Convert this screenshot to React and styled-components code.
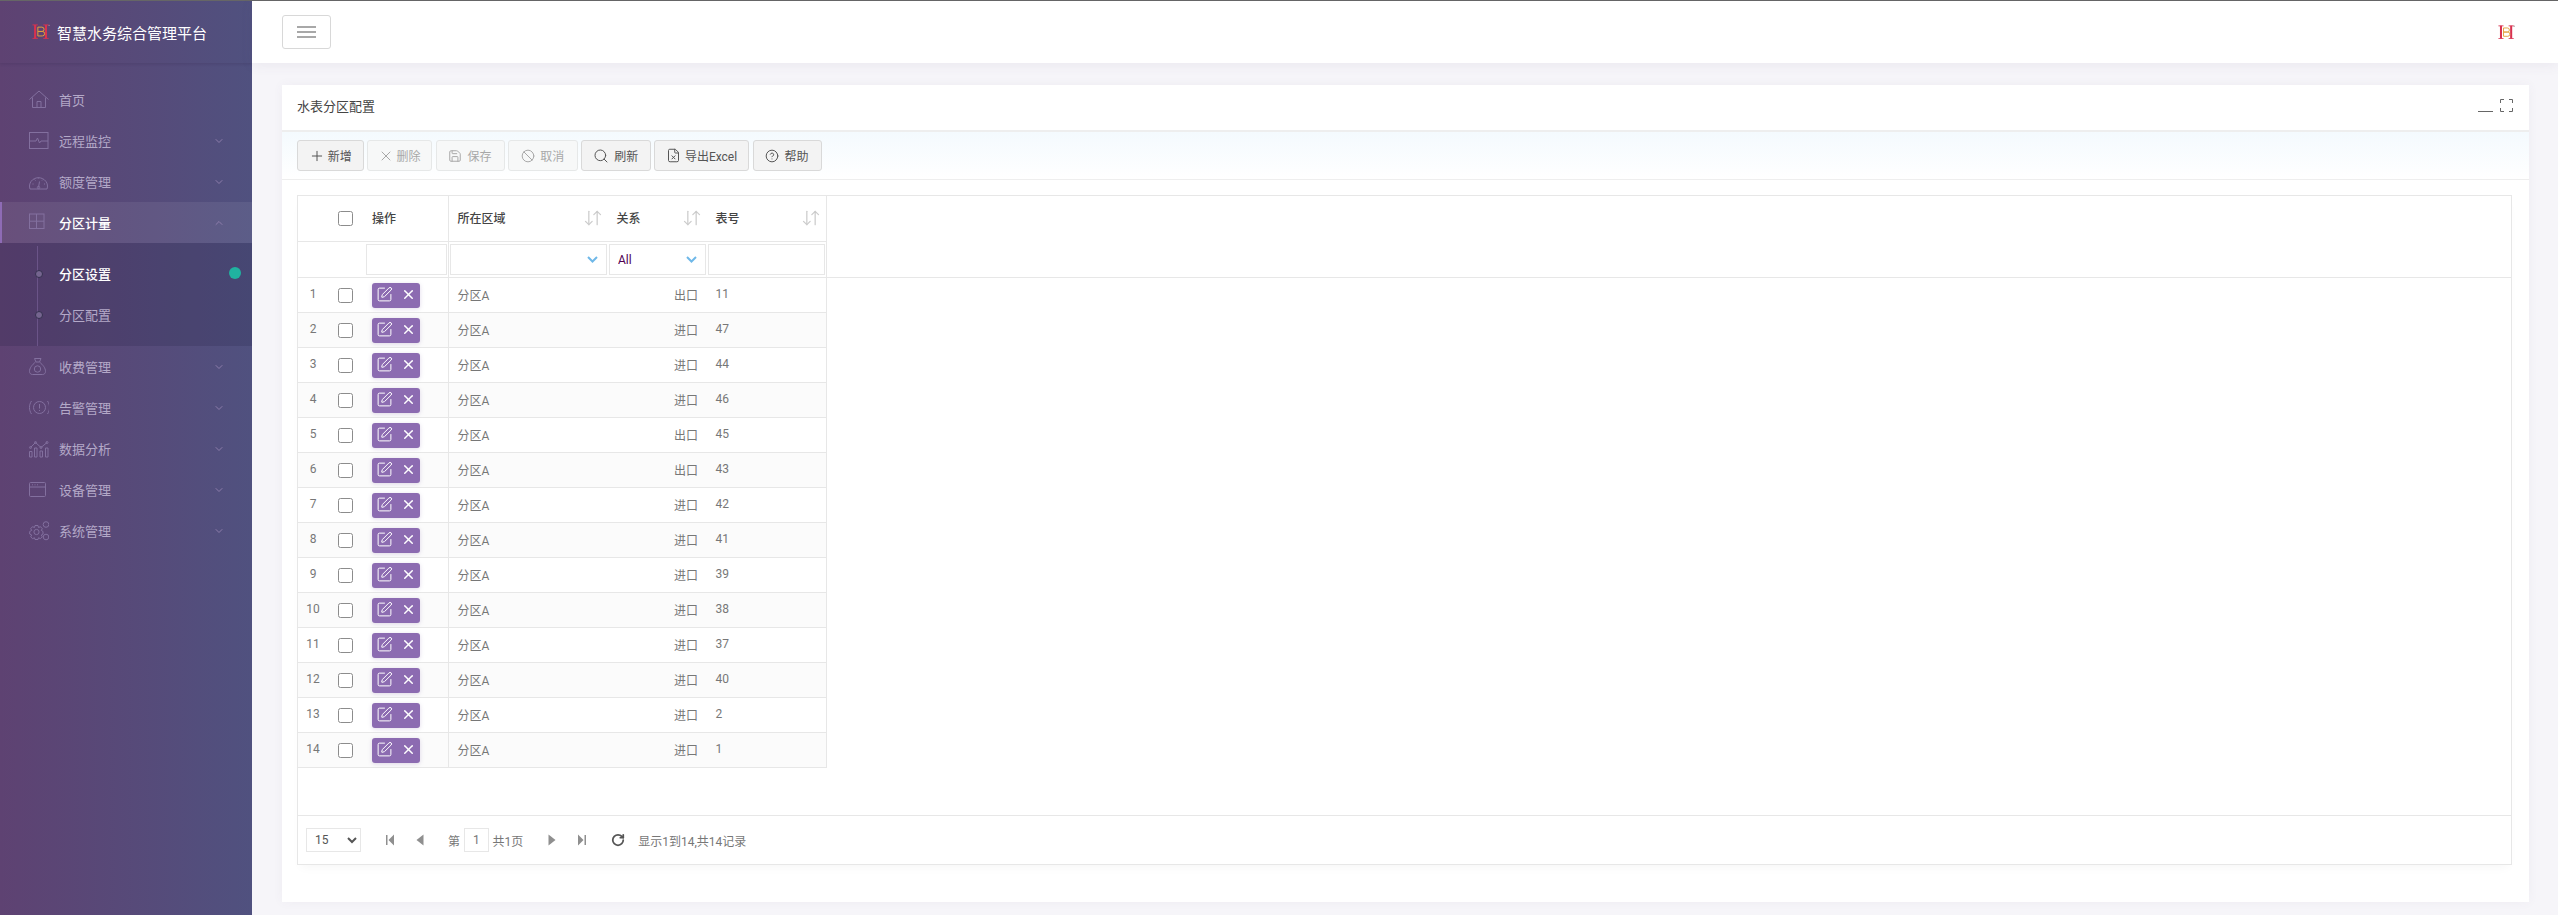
import styled, { createGlobalStyle } from 'styled-components';
import { ArrowDownUp, Ban, ChevronDown, ChevronUp, CircleHelp, FileX, Plus, RotateCw, Save, Search, SquarePen, X } from 'lucide-react';

const FONT = `Roboto, "Noto Sans CJK SC", sans-serif`;

const rows = [
  ['出口', '11'], ['进口', '47'], ['进口', '44'], ['进口', '46'], ['出口', '45'], ['出口', '43'], ['进口', '42'],
  ['进口', '41'], ['进口', '39'], ['进口', '38'], ['进口', '37'], ['进口', '40'], ['进口', '2'], ['进口', '1'],
];

const Logo = ({ size = 18 }) => (
  <svg width={size} height={size * 0.85} viewBox="0 0 20 17" fill="none">
    <path d="M0.500 1h6M0.500 16h6M12.500 1h6M12.500 16h6" stroke="#d8324f" strokeWidth="1" />
    <path d="M3.500 1v15M15.500 1v15" stroke="#d8324f" strokeWidth="2.400" />
    <path d="M6.500 3.500h4.500a2.300 2.300 0 0 1 0 4.800H6.500zM6.500 8.300h5a2.500 2.500 0 0 1 0 5h-5z" stroke="#e2a13c" strokeWidth="1.100" />
    <circle cx="19" cy="1.500" r="0.800" fill="#999" />
  </svg>
);

const icons = {
  home: <><path d="M0.500 9.500 10 1 19.500 9.500" /><path d="M3.500 7.500v10h13v-10M8 17.500v-6h4v6" /></>,
  pulse: <><rect x="0.500" y="1.500" width="18.500" height="16" /><path d="M1 10h6l1.500-3 2 5 1.500-2h7" /></>,
  gauge: <><path d="M1.500 17a9 8.500 0 1 1 17 0z" transform="translate(-.5 0)" /><path d="M9.500 15.500l1-6M3.500 12h1M15 12h1M5.500 7.500l1 1M14 7.500l-1 1M9.500 5.500v1" /><circle cx="9.500" cy="15.500" r="1.200" /></>,
  grid: <><rect x="0.500" y="1" width="14.500" height="14.500" /><path d="M7.500 1v14.500M0.500 8.200h14.500" /></>,
  bag: <><path d="M5.500 1.500h6.500l-1.500 3.500h-3.500z" /><path d="M6.500 5C3 8 .5 11 .5 14.500c0 1.500 1 3 3 3h10c2 0 3-1.500 3-3C16.500 11 14 8 10.500 5" /><circle cx="8.500" cy="12" r="3.200" /></>,
  alert: <><circle cx="10.500" cy="9.500" r="6" /><path d="M10.500 6v4.500M10.500 12v1M2.500 3C-.2 7-.2 12 2.500 16M18.500 3c2.700 4 2.700 9 0 13" /></>,
  chart: <><path d="M.500 12.500v5.500h2.500v-5.500zM5.500 9v9H8V9zM11 12v6h2.500v-6zM16.500 9v9H19V9z" /><path d="M1.500 8.500l5-5 5.500 5 6-5" /><circle cx="1.500" cy="8.500" r="1" /><circle cx="6.500" cy="3.500" r="1" /><circle cx="12" cy="8.500" r="1" /><circle cx="18" cy="3.500" r="1" /></>,
  panel: <><rect x="0.500" y="2.500" width="16" height="14" rx="1" /><path d="M0.500 7h16M3 4.800h1M5.500 4.800h1M8 4.800h1" /></>,
  gear: <><circle cx="7.500" cy="11" r="2.600" /><path d="M6 4.500h3l.5 2 2-.8 1.800 2-1 1.700 1.700 1.100v2.500l-1.700 1 1 1.800-1.800 1.800-2-.8-.5 1.700H6l-.5-1.700-2 .8-1.800-1.800 1-1.800-2-1v-2.500l2-1.100-1-1.700 1.800-2 2 .8z" /><circle cx="17" cy="3.500" r="2.800" /><circle cx="17" cy="16" r="2.800" /></>,
};

const nav = [
  { label: '首页', icon: 'home' },
  { label: '远程监控', icon: 'pulse', arrow: true },
  { label: '额度管理', icon: 'gauge', arrow: true },
  { label: '分区计量', icon: 'grid', arrow: true, open: true },
  { label: '收费管理', icon: 'bag', arrow: true },
  { label: '告警管理', icon: 'alert', arrow: true },
  { label: '数据分析', icon: 'chart', arrow: true },
  { label: '设备管理', icon: 'panel', arrow: true },
  { label: '系统管理', icon: 'gear', arrow: true },
];

const SortIcon = () => <ArrowDownUp size={20} strokeWidth={1.500} />;

const App = () => {
  return (
    <Page>
      <GlobalStyle />
      <Sidebar>
        <Brand>
          <Logo />
          <BrandName>智慧水务综合管理平台</BrandName>
        </Brand>
        <Menu>
          {nav.map((item) => (
            <li key={item.label}>
              <MenuItem $open={item.open}>
                <MenuIcon viewBox="0 0 20 20">{icons[item.icon]}</MenuIcon>
                <span>{item.label}</span>
                {item.arrow && (
                  <MenuArrow>{item.open ? <ChevronUp size={12} strokeWidth={2} /> : <ChevronDown size={12} strokeWidth={2} />}</MenuArrow>
                )}
              </MenuItem>
              {item.open && (
                <SubMenu>
                  <SubItem $active>
                    分区设置
                    <ActiveDot />
                  </SubItem>
                  <SubItem>分区配置</SubItem>
                </SubMenu>
              )}
            </li>
          ))}
        </Menu>
      </Sidebar>
      <Main>
        <Header>
          <MenuButton>
            <span />
            <span />
            <span />
          </MenuButton>
          <Logo size={17} />
        </Header>
        <Content>
          <Panel>
            <PanelTitle>
              水表分区配置
              <WindowTools>
                <Minimize />
                <svg width="13" height="13" viewBox="0 0 13 13" fill="none" stroke="#666" strokeWidth="1">
                  <path d="M0.500 4V0.500H4M9 0.500h3.500V4M12.500 9v3.500H9M4 12.500H0.500V9" />
                </svg>
              </WindowTools>
            </PanelTitle>
            <Toolbar>
              <ToolButton $w={66.5} $gap={3}><Plus size={16} strokeWidth={1.500} />新增</ToolButton>
              <ToolButton $w={65} $gap={2} disabled><X size={16} strokeWidth={1.500} />删除</ToolButton>
              <ToolButton $w={69} disabled><Save size={14} strokeWidth={1.700} />保存</ToolButton>
              <ToolButton $w={69.5} disabled><Ban size={14} strokeWidth={1.700} />取消</ToolButton>
              <ToolButton $w={69.5}><Search size={16} strokeWidth={1.500} />刷新</ToolButton>
              <ToolButton $w={95} $gap={4}><FileX size={15} strokeWidth={1.600} />导出Excel</ToolButton>
              <ToolButton $w={69}><CircleHelp size={14} strokeWidth={1.700} />帮助</ToolButton>
            </Toolbar>
            <PanelBody>
              <GridBox>
                <GridHead>
                  <Table>
                    <Columns />
                    <thead>
                      <tr>
                        <HeadCell />
                        <CheckHeadCell><CheckBox type="checkbox" /></CheckHeadCell>
                        <HeadCell $divider>操作</HeadCell>
                        <HeadCell><SortTitle>所在区域<SortIcon /></SortTitle></HeadCell>
                        <HeadCell><SortTitle>关系<SortIcon /></SortTitle></HeadCell>
                        <HeadCell $end><SortTitle>表号<SortIcon /></SortTitle></HeadCell>
                      </tr>
                      <tr>
                        <FilterCell />
                        <FilterCell />
                        <FilterCell $divider><FilterInput /></FilterCell>
                        <FilterCell>
                          <FilterSelect defaultValue="">
                            <option value="" />
                          </FilterSelect>
                        </FilterCell>
                        <FilterCell>
                          <FilterSelect defaultValue="All">
                            <option>All</option>
                          </FilterSelect>
                        </FilterCell>
                        <FilterCell $end><FilterInput /></FilterCell>
                      </tr>
                    </thead>
                  </Table>
                </GridHead>
                <GridScroll>
                  <Table>
                    <Columns />
                    <tbody>
                      {rows.map(([relation, meter], i) => (
                        <Row key={meter} $even={i % 2 === 1}>
                          <IndexCell>{i + 1}</IndexCell>
                          <CheckCell><CheckBox type="checkbox" /></CheckCell>
                          <ActionCell $divider>
                            <ActionGroup>
                              <SquarePen size={17} strokeWidth={1.400} />
                              <X size={15} strokeWidth={2.400} />
                            </ActionGroup>
                          </ActionCell>
                          <BodyCell>分区A</BodyCell>
                          <RelationCell>{relation}</RelationCell>
                          <BodyCell $end>{meter}</BodyCell>
                        </Row>
                      ))}
                    </tbody>
                  </Table>
                </GridScroll>
                <Pager>
                  <PageSize defaultValue="15">
                    <option>15</option>
                  </PageSize>
                  <PagerGroup>
                    <PagerIcon viewBox="0 0 8 12"><path d="M0 1h1.500v10H0zM8 .500v11L2.500 6z" /></PagerIcon>
                    <PagerIcon viewBox="0 0 8 12"><path d="M7.500 .500v11L.500 6z" /></PagerIcon>
                  </PagerGroup>
                  <PageLabel>
                    第<PageInput defaultValue="1" />共1页
                  </PageLabel>
                  <PagerGroup>
                    <PagerIcon viewBox="0 0 8 12"><path d="M.500 .500v11l7-5.500z" /></PagerIcon>
                    <PagerIcon viewBox="0 0 8 12"><path d="M0 .500v11L5.500 6zM6.500 1H8v10H6.500z" /></PagerIcon>
                  </PagerGroup>
                  <Refresh><RotateCw size={14} strokeWidth={3} /></Refresh>
                  <span>显示1到14,共14记录</span>
                </Pager>
              </GridBox>
            </PanelBody>
          </Panel>
        </Content>
      </Main>
    </Page>
  );
};

const Columns = () => (
  <colgroup>
    <col style={{ width: 30 }} />
    <col style={{ width: 37 }} />
    <col style={{ width: 84 }} />
    <col style={{ width: 159 }} />
    <col style={{ width: 99 }} />
    <col style={{ width: 120 }} />
  </colgroup>
);

const GlobalStyle = createGlobalStyle`
  html, body {
    margin: 0;
    padding: 0;
    height: 100%;
    overflow: hidden;
  }

  * {
    box-sizing: border-box;
  }

  body {
    font-family: ${FONT};
    font-size: 12px;
    color: #676a6c;
  }

  svg {
    display: block;
    flex-shrink: 0;
  }
`;

const Page = styled.div`
  display: grid;
  grid-template-columns: 252px 1fr;
  height: 915px;
  border-top: 1px solid #666;
  background: #f6f5f9;
`;

const Sidebar = styled.aside`
  background: linear-gradient(90deg, #5e4272 0%, #50517f 100%);
  color: #b4a9c8;
  overflow: hidden;
`;

const Brand = styled.div`
  display: flex;
  align-items: center;
  gap: 7px;
  height: 62px;
  padding-left: 32px;
  box-shadow: 0 1px 3px rgba(50, 40, 80, 0.25);
`;

const BrandName = styled.span`
  color: #fff;
  font-size: 15px;
`;

const Menu = styled.ul`
  list-style: none;
  margin: 0;
  padding: 16px 0 0;
`;

const MenuItem = styled.div`
  position: relative;
  display: flex;
  align-items: center;
  height: 41px;
  padding-left: ${(p) => (p.$open ? '27px' : '29px')};
  font-size: 13px;
  color: ${(p) => (p.$open ? '#fff' : 'inherit')};
  font-weight: ${(p) => (p.$open ? 500 : 400)};
  border-left: ${(p) => (p.$open ? '2px solid #8e6bb5' : 'none')};
  background: ${(p) => (p.$open ? 'rgba(255, 255, 255, 0.07)' : 'transparent')};
`;

const MenuIcon = styled.svg`
  width: 20px;
  height: 20px;
  margin-right: 10px;
  fill: none;
  stroke: #83709f;
  stroke-width: 1;
`;

const MenuArrow = styled.span`
  margin-left: auto;
  margin-right: 27px;
  color: #8d7dab;
`;

const SubMenu = styled.ul`
  position: relative;
  list-style: none;
  margin: 0;
  padding: 10px 0;
  height: 103px;
  background: rgba(30, 25, 60, 0.18);

  &::before {
    content: '';
    position: absolute;
    left: 37px;
    top: 3px;
    bottom: 0;
    width: 1px;
    background: #6b5488;
  }
`;

const SubItem = styled.li`
  position: relative;
  display: flex;
  align-items: center;
  height: 41px;
  padding-left: 59px;
  font-size: 13px;
  color: ${(p) => (p.$active ? '#fff' : 'inherit')};
  font-weight: ${(p) => (p.$active ? 500 : 400)};

  &::before {
    content: '';
    position: absolute;
    left: 35px;
    top: 17px;
    width: 6px;
    height: 6px;
    border-radius: 50%;
    background: #75658f;
    border: 1px solid #35304f;
  }
`;

const ActiveDot = styled.i`
  position: absolute;
  right: 11px;
  top: 14px;
  width: 12px;
  height: 12px;
  border-radius: 50%;
  background: #20b2a0;
`;

const Main = styled.main`
  display: flex;
  flex-direction: column;
  min-width: 0;
`;

const Header = styled.header`
  display: flex;
  align-items: center;
  justify-content: space-between;
  height: 62px;
  padding: 0 43px 0 30px;
  background: #fff;
  box-shadow: 0 2px 12px rgba(90, 80, 120, 0.08);
`;

const MenuButton = styled.button`
  display: flex;
  flex-direction: column;
  align-items: center;
  justify-content: center;
  gap: 3px;
  width: 49px;
  height: 34px;
  padding: 0;
  background: #fff;
  border: 1px solid #d8d8d8;
  border-radius: 3px;

  span {
    display: block;
    width: 19px;
    height: 2px;
    background: #a8a8a8;
  }
`;

const Content = styled.div`
  flex: 1;
  padding: 22px 29px 13px 30px;
  min-height: 0;
`;

const Panel = styled.section`
  display: flex;
  flex-direction: column;
  height: 100%;
  background: #fff;
  box-shadow: 0 0 10px rgba(90, 80, 120, 0.05);
`;

const PanelTitle = styled.div`
  display: flex;
  align-items: center;
  justify-content: space-between;
  height: 47px;
  padding: 0 16px 4px 15px;
  color: #444;
  font-size: 13px;
  border-bottom: 2px solid #eeeeee;
`;

const WindowTools = styled.div`
  display: flex;
  align-items: flex-end;
  gap: 7px;
`;

const Minimize = styled.i`
  width: 15px;
  height: 1px;
  background: #666;
`;

const Toolbar = styled.div`
  display: flex;
  gap: 3.500px;
  height: 48px;
  padding: 8px 15px;
  border-bottom: 1px solid #eeeeee;
  background: linear-gradient(180deg, #f4fafe 0%, #ffffff 100%);
`;

const ToolButton = styled.button`
  display: flex;
  align-items: center;
  justify-content: center;
  gap: ${(p) => p.$gap ?? 5}px;
  width: ${(p) => p.$w}px;
  height: 31px;
  padding: 0;
  font-family: ${FONT};
  font-size: 12px;
  color: ${(p) => (p.disabled ? '#a8a8a8' : '#555')};
  background: ${(p) => (p.disabled ? '#f7f8f8' : '#f3f3f3')};
  border: 1px solid ${(p) => (p.disabled ? '#e6e8e8' : '#d9d9d9')};
  border-radius: 3px;
`;

const PanelBody = styled.div`
  flex: 1;
  min-height: 0;
  padding: 15px 17px 37px 15px;
`;

const GridBox = styled.div`
  display: flex;
  flex-direction: column;
  height: 100%;
  border: 1px solid #e7e7e7;
  box-shadow: 0 6px 10px -4px rgba(0, 0, 0, 0.04);
`;

const GridHead = styled.div`
  border-bottom: 1px solid #e7e7e7;
`;

const GridScroll = styled.div`
  flex: 1;
  min-height: 0;
`;

const Table = styled.table`
  table-layout: fixed;
  width: 529px;
  border-collapse: separate;
  border-spacing: 0;
`;

const cellEdges = (p) => `
  border-right: ${p.$divider || p.$end ? '1px solid #e7e7e7' : 'none'};
`;

const HeadCell = styled.th`
  ${cellEdges}
  height: 46px;
  padding: 0 5px 2px 7px;
  text-align: left;
  font-weight: 500;
  font-size: 12px;
  color: #444;
  border-bottom: 1px solid #e7e7e7;

  &:nth-child(n + 4) {
    padding-left: 8.500px;
  }
`;

const CheckHeadCell = styled(HeadCell)`
  padding: 0;
`;

const SortTitle = styled.div`
  display: flex;
  align-items: center;
  justify-content: space-between;
  color: #444;

  svg {
    color: #cccccc;
  }
`;

const FilterCell = styled.td`
  ${cellEdges}
  height: 35px;
  padding: 2px 1px;
`;

const FilterInput = styled.input`
  display: block;
  width: 100%;
  height: 31px;
  border: 1px solid #e7e7e7;
  outline: none;
`;

const FilterSelect = styled.select`
  display: block;
  width: 100%;
  height: 31px;
  padding: 0 8px;
  font-family: ${FONT};
  font-size: 12px;
  color: #500050;
  border: 1px solid #e7e7e7;
  border-radius: 0;
  outline: none;
  appearance: none;
  background: #fff url("data:image/svg+xml,%3Csvg xmlns='http://www.w3.org/2000/svg' width='11' height='7' viewBox='0 0 11 7' fill='none' stroke='%236fb8e8' stroke-width='2'%3E%3Cpath d='M1 1l4.500 4.500L10 1'/%3E%3C/svg%3E") no-repeat right 8px center;
`;

const Row = styled.tr`
  background: ${(p) => (p.$even ? '#fbfbfb' : '#fff')};
`;

const BodyCell = styled.td`
  ${cellEdges}
  height: 35px;
  padding: 0 7px 2px;
  color: #777;
  border-bottom: 1px solid #e7e7e7;

  &:nth-child(n + 4) {
    padding-left: 8.500px;
  }
`;

const IndexCell = styled(BodyCell)`
  padding: 0 0 2px;
  text-align: center;
`;

const CheckCell = styled(BodyCell)`
  padding: 0;
`;

const ActionCell = styled(BodyCell)`
  padding-bottom: 0;
`;

const RelationCell = styled(BodyCell)`
  text-align: right;
  padding-right: 9px;
`;

const CheckBox = styled.input`
  display: block;
  width: 15px;
  height: 15px;
  margin: 0 0 0 10px;
  appearance: none;
  background: #fff;
  border: 1px solid #8c8c8c;
  border-radius: 2.500px;
`;

const ActionGroup = styled.div`
  display: flex;
  align-items: center;
  gap: 8px;
  width: 48px;
  height: 25px;
  padding: 0 0 2px 4px;
  color: #fff;
  background: #8c6bb1;
  border-radius: 3px;
  box-shadow: 0 1px 4px rgba(140, 107, 177, 0.25);
`;

const Pager = styled.div`
  display: flex;
  align-items: center;
  height: 49px;
  padding-left: 8px;
  color: #777;
  border-top: 1px solid #e7e7e7;
`;

const PageSize = styled.select`
  width: 55px;
  height: 24px;
  padding-left: 4px;
  margin-right: 25px;
  font-family: ${FONT};
  font-size: 12px;
  color: #555;
  background: #fff;
  border: 1px solid #e7e7e7;
  border-radius: 0;
  outline: none;
`;

const PagerGroup = styled.div`
  display: flex;
  align-items: center;
  gap: 22px;
`;

const PagerIcon = styled.svg`
  width: 8px;
  height: 12px;
  fill: #8f8f8f;
`;

const PageLabel = styled.div`
  display: flex;
  align-items: center;
  gap: 4px;
  margin: 0 25px 0 24px;
`;

const PageInput = styled.input`
  width: 24.500px;
  height: 24px;
  padding: 0;
  text-align: center;
  font-family: ${FONT};
  font-size: 12px;
  color: #777;
  border: 1px solid #e7e7e7;
  outline: none;
`;

const Refresh = styled.span`
  margin: 0 13px 0 25px;
  color: #555;
`;

export default App;
